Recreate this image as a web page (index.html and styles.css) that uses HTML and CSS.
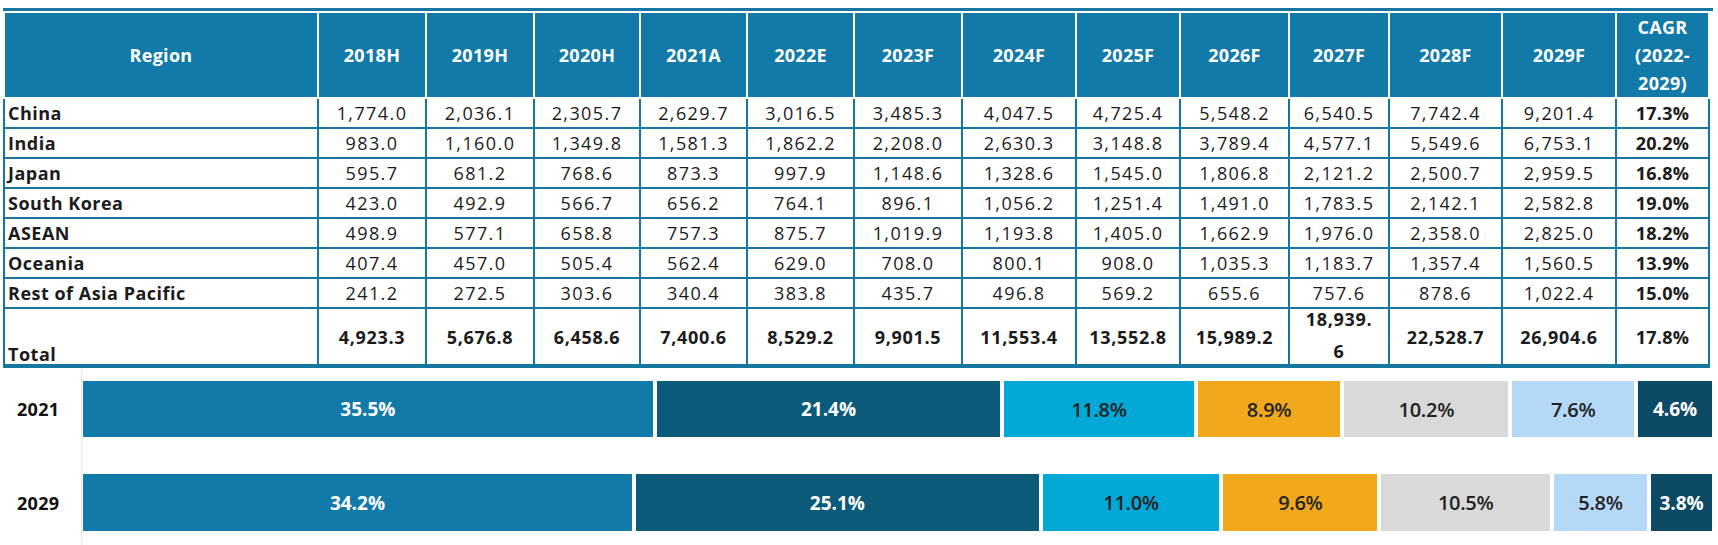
FILE: index.html
```html
<!DOCTYPE html>
<html>
<head>
<meta charset="utf-8">
<link rel="stylesheet" href="styles.css">
</head>
<body>
<div class="table-wrap">
  <table class="data">
    <colgroup>
      <col style="width:314px"><col style="width:108px"><col style="width:108px"><col style="width:106px"><col style="width:107px"><col style="width:107px"><col style="width:108px"><col style="width:114px"><col style="width:104px"><col style="width:109px"><col style="width:100px"><col style="width:113px"><col style="width:114px"><col style="width:93px">
    </colgroup>
    <thead>
      <tr>
        <th>Region</th><th>2018H</th><th>2019H</th><th>2020H</th><th>2021A</th><th>2022E</th><th>2023F</th><th>2024F</th><th>2025F</th><th>2026F</th><th>2027F</th><th>2028F</th><th>2029F</th><th class="cagr-h">CAGR (2022-2029)</th>
      </tr>
    </thead>
    <tbody>
      <tr><td class="reg">China</td><td>1,774.0</td><td>2,036.1</td><td>2,305.7</td><td>2,629.7</td><td>3,016.5</td><td>3,485.3</td><td>4,047.5</td><td>4,725.4</td><td>5,548.2</td><td>6,540.5</td><td>7,742.4</td><td>9,201.4</td><td class="cagr">17.3%</td></tr>
      <tr><td class="reg">India</td><td>983.0</td><td>1,160.0</td><td>1,349.8</td><td>1,581.3</td><td>1,862.2</td><td>2,208.0</td><td>2,630.3</td><td>3,148.8</td><td>3,789.4</td><td>4,577.1</td><td>5,549.6</td><td>6,753.1</td><td class="cagr">20.2%</td></tr>
      <tr><td class="reg">Japan</td><td>595.7</td><td>681.2</td><td>768.6</td><td>873.3</td><td>997.9</td><td>1,148.6</td><td>1,328.6</td><td>1,545.0</td><td>1,806.8</td><td>2,121.2</td><td>2,500.7</td><td>2,959.5</td><td class="cagr">16.8%</td></tr>
      <tr><td class="reg">South Korea</td><td>423.0</td><td>492.9</td><td>566.7</td><td>656.2</td><td>764.1</td><td>896.1</td><td>1,056.2</td><td>1,251.4</td><td>1,491.0</td><td>1,783.5</td><td>2,142.1</td><td>2,582.8</td><td class="cagr">19.0%</td></tr>
      <tr><td class="reg">ASEAN</td><td>498.9</td><td>577.1</td><td>658.8</td><td>757.3</td><td>875.7</td><td>1,019.9</td><td>1,193.8</td><td>1,405.0</td><td>1,662.9</td><td>1,976.0</td><td>2,358.0</td><td>2,825.0</td><td class="cagr">18.2%</td></tr>
      <tr><td class="reg">Oceania</td><td>407.4</td><td>457.0</td><td>505.4</td><td>562.4</td><td>629.0</td><td>708.0</td><td>800.1</td><td>908.0</td><td>1,035.3</td><td>1,183.7</td><td>1,357.4</td><td>1,560.5</td><td class="cagr">13.9%</td></tr>
      <tr><td class="reg">Rest of Asia Pacific</td><td>241.2</td><td>272.5</td><td>303.6</td><td>340.4</td><td>383.8</td><td>435.7</td><td>496.8</td><td>569.2</td><td>655.6</td><td>757.6</td><td>878.6</td><td>1,022.4</td><td class="cagr">15.0%</td></tr>
      <tr class="total"><td class="reg">Total</td><td>4,923.3</td><td>5,676.8</td><td>6,458.6</td><td>7,400.6</td><td>8,529.2</td><td>9,901.5</td><td>11,553.4</td><td>13,552.8</td><td>15,989.2</td><td class="wrap"><span class="stack">18,939.<br>6</span></td><td>22,528.7</td><td>26,904.6</td><td class="cagr">17.8%</td></tr>
    </tbody>
  </table>
</div>
<div class="chart">
  <div class="years">
    <div class="year">2021</div>
    <div class="year y2029">2029</div>
  </div>
  <div class="bars">
    <div class="bar">
      <div class="seg s1" style="flex-grow:35.5">35.5%</div>
      <div class="seg s2" style="flex-grow:21.4">21.4%</div>
      <div class="seg s3" style="flex-grow:11.8">11.8%</div>
      <div class="seg s4" style="flex-grow:8.9">8.9%</div>
      <div class="seg s5" style="flex-grow:10.2">10.2%</div>
      <div class="seg s6" style="flex-grow:7.6">7.6%</div>
      <div class="seg s7" style="flex-grow:4.6">4.6%</div>
    </div>
    <div class="bar b2029">
      <div class="seg s1" style="flex-grow:34.2">34.2%</div>
      <div class="seg s2" style="flex-grow:25.1">25.1%</div>
      <div class="seg s3" style="flex-grow:11.0">11.0%</div>
      <div class="seg s4" style="flex-grow:9.6">9.6%</div>
      <div class="seg s5" style="flex-grow:10.5">10.5%</div>
      <div class="seg s6" style="flex-grow:5.8">5.8%</div>
      <div class="seg s7" style="flex-grow:3.8">3.8%</div>
    </div>
  </div>
</div>
</body>
</html>
```
FILE: styles.css
```css
* { box-sizing: border-box; }
body {
  margin: 0;
  width: 1718px;
  height: 545px;
  overflow: hidden;
  background: #ffffff;
  font-family: "Open Sans", "Noto Sans", sans-serif;
  color: #1b1b1b;
}
.table-wrap {
  margin: 8px 0 0 3px;
  width: 1710px;
  border-top: 3px solid #16769f;
  padding-top: 2px;
}
table.data {
  width: 1705px;
  table-layout: fixed;
  border-collapse: collapse;
}
.data th {
  height: 85px;
  background: #117aa8;
  color: #ffffff;
  font-weight: 700;
  font-size: 18px;
  letter-spacing: 0.3px;
  line-height: 28px;
  text-align: center;
  vertical-align: middle;
  border: 2px solid #ffffff;
  border-top: 0;
  padding: 0 2px;
}
.data td {
  height: 30px;
  border: 2px solid #16769f;
  text-align: center;
  vertical-align: middle;
  font-size: 18px;
  line-height: 22px;
  padding: 0 2px;
  white-space: nowrap;
  letter-spacing: 1.4px;
}
.data td.reg {
  text-align: left;
  font-weight: 700;
  padding-left: 3px;
  letter-spacing: 0.5px;
}
.data td.cagr {
  font-weight: 700;
  letter-spacing: 0.3px;
}
.data tr.total td {
  height: 58px;
  padding-top: 0;
  padding-bottom: 0;
  font-weight: 700;
  border-bottom: 4px solid #16769f;
  line-height: 24px;
  letter-spacing: 0.7px;
}
.data tr.total td.reg {
  vertical-align: bottom;
  line-height: 19px;
  letter-spacing: 0.5px;
}
.data tr.total td.cagr { letter-spacing: 0.3px; }
.stack {
  display: block;
  line-height: 32px;
  margin: -7px 0 -3px;
}
.chart {
  display: flex;
  height: 177px;
}
.years {
  width: 82px;
  border-right: 1px solid #ece6e6;
  display: flex;
  flex-direction: column;
  gap: 37px;
  padding-top: 13px;
}
.year {
  height: 56px;
  display: flex;
  align-items: center;
  padding-left: 17px;
  font-weight: 700;
  font-size: 18px;
  letter-spacing: 0.3px;
  color: #111111;
}
.year.y2029 { height: 57px; }
.bars {
  flex: 1;
  display: flex;
  flex-direction: column;
  gap: 37px;
  padding: 13px 6px 0 1px;
}
.bar {
  display: flex;
  gap: 4px;
  height: 56px;
}
.bar.b2029 { height: 57px; }
.seg {
  flex-basis: 0;
  min-width: 0;
  display: flex;
  align-items: center;
  justify-content: center;
  font-size: 19px;
  font-weight: 700;
  color: #ffffff;
}
.s1 { background: #117aa8; }
.s2 { background: #0b5a7a; }
.s3 { background: #03a9d6; }
.s4 { background: #f2a81d; }
.s5 { background: #d9d9d9; }
.s6 { background: #b5d8f6; }
.s7 { background: #0c4a66; }
.s3, .s4, .s5, .s6 {
  color: #222222;
  font-weight: 600;
  font-size: 20px;
  letter-spacing: -0.3px;
}
```
